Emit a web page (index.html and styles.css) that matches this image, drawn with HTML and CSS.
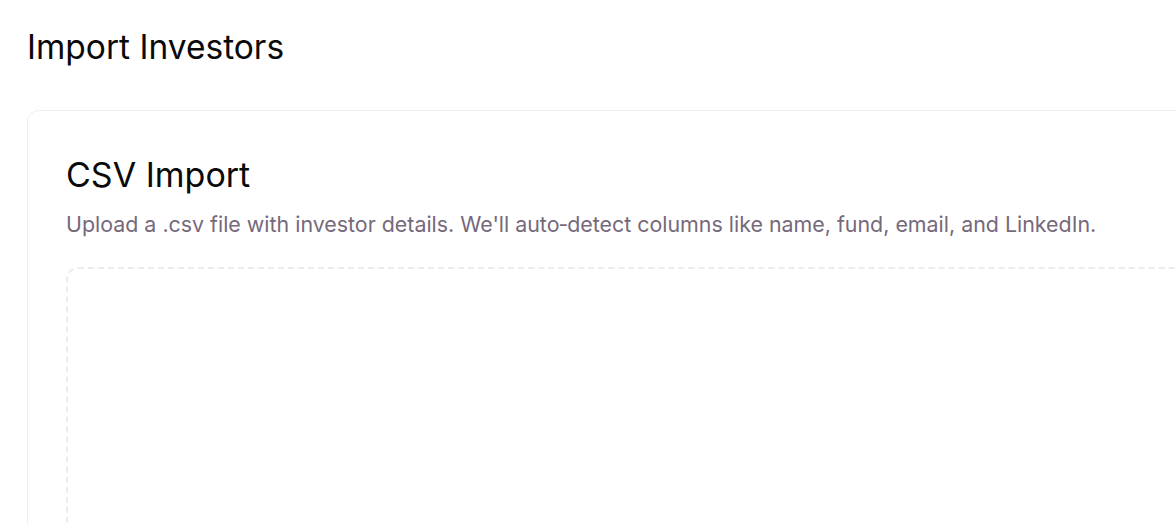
FILE: index.html
```html
<!DOCTYPE html>
<html lang="en">

<head>
  <meta charset="UTF-8">
  <meta name="viewport" content="width=device-width, initial-scale=1.0">
  <title>Import Investors</title>
  <link rel="stylesheet" href="styles.css">
</head>

<body>
  <div class="page">
    <h1 class="title">Import Investors</h1>
    <div class="card">
      <h2 class="card-title">CSV Import</h2>
      <p class="card-desc">Upload a .csv file with investor details. We'll auto&#8209;detect columns like name, fund, email, and LinkedIn.</p>
      <div class="dropzone"></div>
    </div>
  </div>
</body>

</html>
```

FILE: styles.css
```css
* {
  box-sizing: border-box;
}

body {
  margin: 0;
  overflow: hidden;
  background: #fff;
  color: #0a0a0a;
  font-family: Inter, "Noto Sans", sans-serif;
  font-optical-sizing: none;
}

.page {
  width: 1400px;
  padding: 22px 0 0 27px;
}

.title {
  margin: 0 0 38px;
  font-size: 33.5px;
  font-weight: 400;
  line-height: 50px;
}

.card {
  padding: 44px 38px;
  border: 1px solid #efefef;
  border-radius: 12px;
}

.card-title {
  margin: 0;
  font-size: 34px;
  font-weight: 400;
  line-height: 40px;
}

.card-desc {
  margin: 14px 0 28px;
  color: #76697b;
  font-size: 21.4px;
  line-height: 30px;
}

.dropzone {
  height: 400px;
  border: 2px dashed #ececec;
  border-radius: 12px;
}
```
